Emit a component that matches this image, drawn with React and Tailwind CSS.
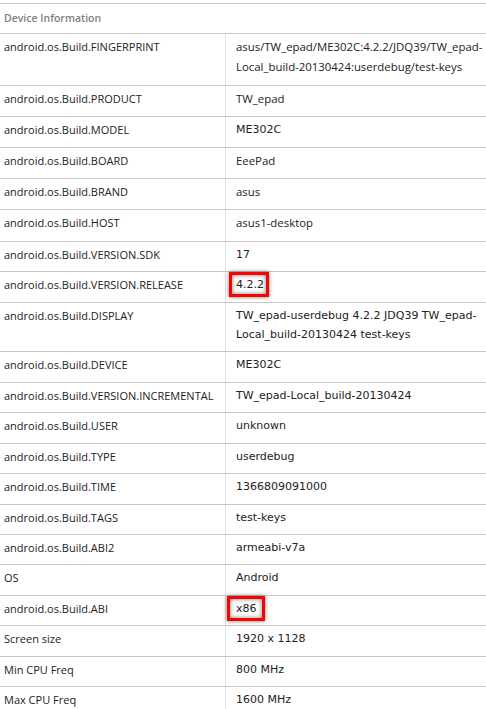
import React from "react";

const OS = "font-['Open_Sans',sans-serif] text-[11.4px]";

const rows = [
  ["android.os.Build.FINGERPRINT", <span className={OS}>asus/TW_epad/ME302C:4.2.2/JDQ39/TW_epad-<br />Local_build-20130424:userdebug/test-keys</span>],
  ["android.os.Build.PRODUCT", <span className={OS}>TW_epad</span>],
  ["android.os.Build.MODEL", "ME302C"],
  ["android.os.Build.BOARD", <span className={OS}>EeePad</span>],
  ["android.os.Build.BRAND", <span className={OS}>asus</span>],
  ["android.os.Build.HOST", <span className={OS}>asus1-desktop</span>],
  ["android.os.Build.VERSION.SDK", "17"],
  ["android.os.Build.VERSION.RELEASE", <Mark l="-7px" r="-5px">4.2.2</Mark>],
  ["android.os.Build.DISPLAY", <>TW_epad-userdebug 4.2.2 JDQ39 TW_epad-<br />Local_build-20130424 test-keys</>],
  ["android.os.Build.DEVICE", "ME302C"],
  ["android.os.Build.VERSION.INCREMENTAL", "TW_epad-Local_build-20130424"],
  ["android.os.Build.USER", "unknown"],
  ["android.os.Build.TYPE", "userdebug"],
  ["android.os.Build.TIME", "1366809091000"],
  ["android.os.Build.TAGS", "test-keys"],
  ["android.os.Build.ABI2", "armeabi-v7a"],
  ["OS", "Android"],
  ["android.os.Build.ABI", <Mark l="-9px" r="-8px">x86</Mark>],
  ["Screen size", "1920 x 1128"],
  ["Min CPU Freq", "800 MHz"],
  ["Max CPU Freq", "1600 MHz"],
];

function Mark({ children, l, r }) {
  return (
    <span className="relative">
      {children}
      <span
        className="absolute top-[-6px] bottom-[-6px] border-[3px] border-[#ff0000] shadow-[0_0_4px_rgba(0,0,0,0.55),inset_0_0_4px_rgba(0,0,0,0.55)]"
        style={{ left: l, right: r }}
      />
    </span>
  );
}

export default function App() {
  return (
    <div className="w-[486px] h-[709px] overflow-hidden bg-white pt-[3px]">
      <div className="border-t border-[#cccccc]">
        <div className="h-[29px] flex items-center pl-[4px] font-['Open_Sans',sans-serif] text-[10.5px] font-semibold text-[#808080]">
          Device Information
        </div>
        {rows.map(([k, v], i) => (
          <div key={i} className="grid grid-cols-[226px_1fr] border-t border-[#c8c8c8]">
            <div className="border-r border-[#e2e2e2] pl-[4px] pt-[3px] pb-[7px] leading-[19.4px] font-['Open_Sans',sans-serif] text-[11px] text-[#222222]">
              {k}
            </div>
            <div className="pl-[10px] pt-[3px] pb-[7px] leading-[19.4px] font-['DejaVu_Sans',sans-serif] text-[11px] text-[#222222]">
              {v}
            </div>
          </div>
        ))}
      </div>
    </div>
  );
}
